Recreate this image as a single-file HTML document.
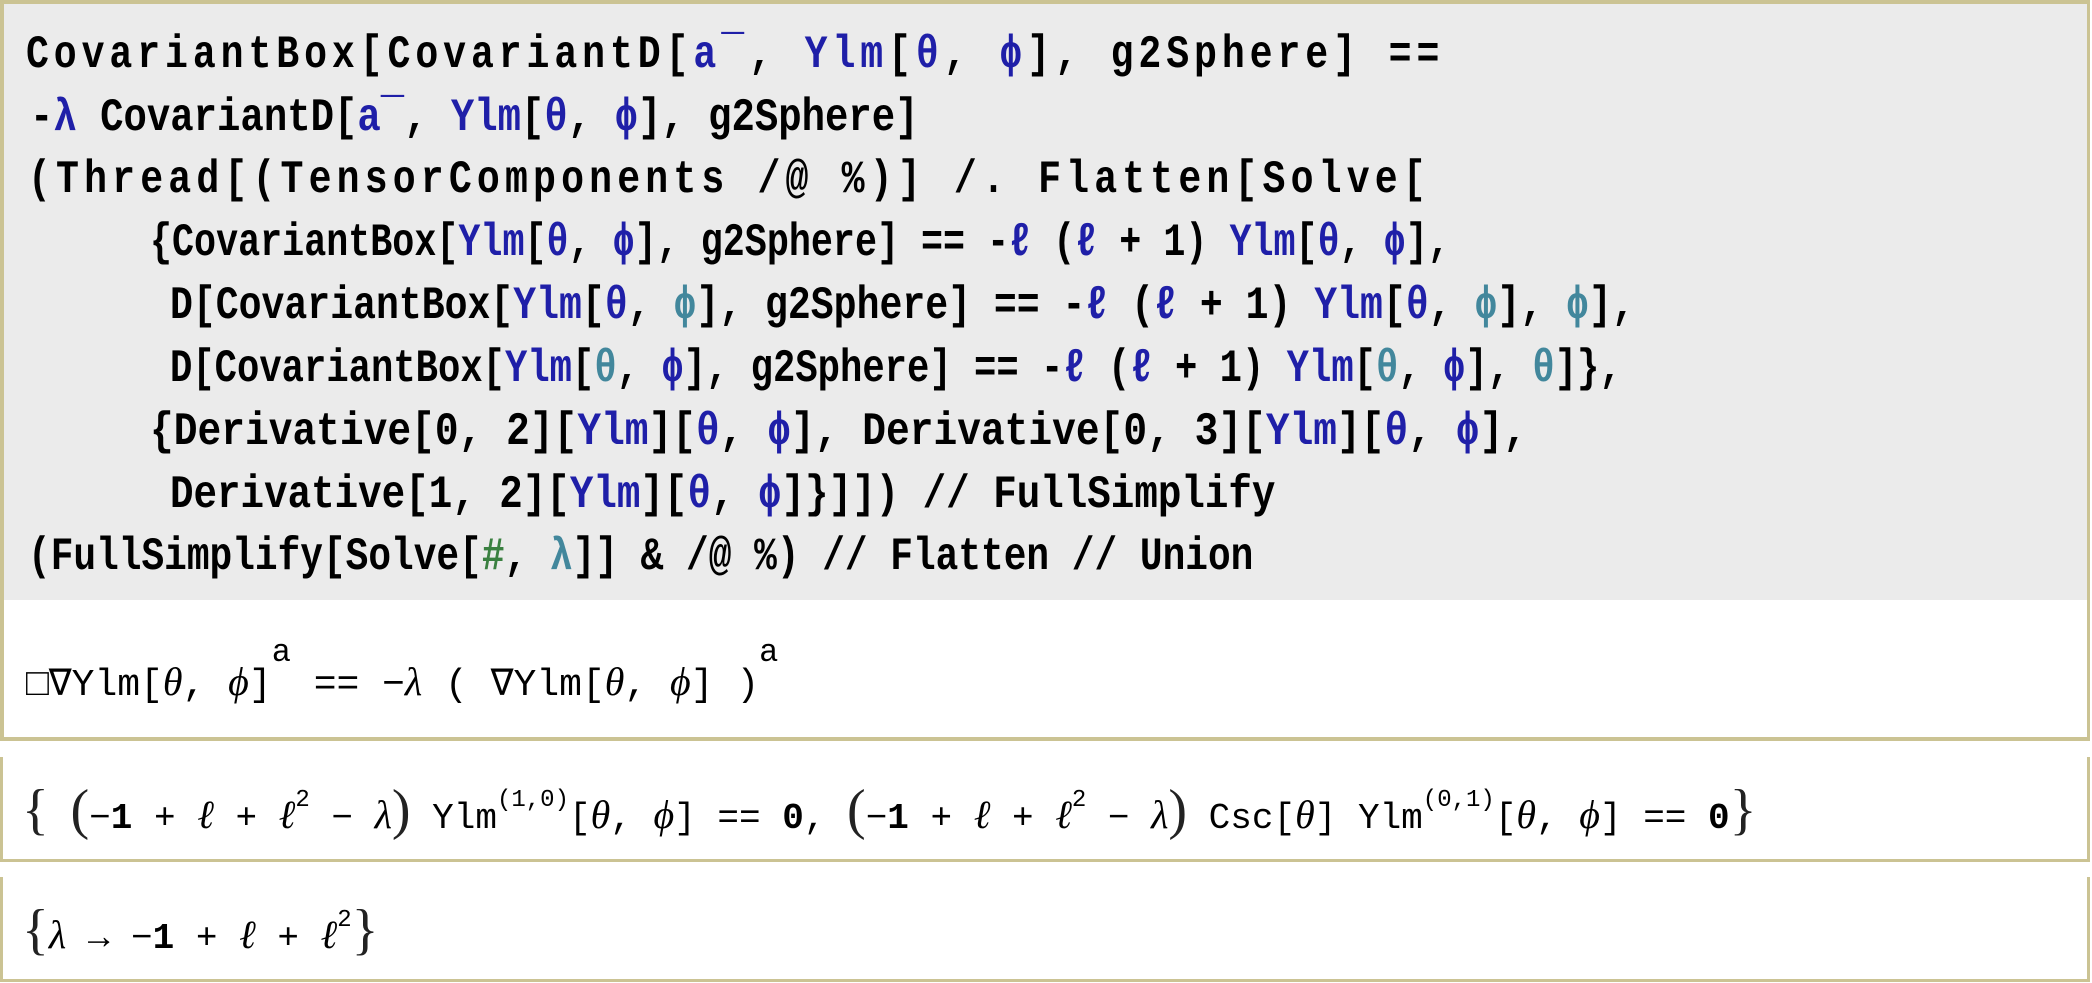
<!DOCTYPE html>
<html><head><meta charset="utf-8"><style>
html,body{margin:0;padding:0;background:#fff;width:2092px;height:983px;overflow:hidden;position:relative}
.cell{position:absolute;box-sizing:border-box;border:4px solid #cbc393}
.in{left:0;top:0;width:2090px;height:741px;border-width:4px 3px 4px 4px}
.gray{position:absolute;left:4px;top:4px;width:2083px;height:596px;background:#ebebeb}
.o2{left:0;top:757px;width:2090px;height:105px;border-width:0 3px 3px 3px}
.o3{left:0;top:877px;width:2090px;height:105px;border-width:0 3px 3px 3px}
.l{position:absolute;white-space:pre;font-family:"Liberation Mono",monospace;font-weight:bold;font-size:46px;letter-spacing:0;color:#000;line-height:50px;transform-origin:left}
.b{color:#1f1fa8}.t{color:#42879c}.g{color:#3a8040}
.o{position:absolute;white-space:pre;font-family:"Liberation Mono",monospace;font-size:38px;line-height:50px;color:#000}
.i{font-family:"Liberation Serif",serif;font-style:italic;font-size:40px}
.s{font-size:24px;vertical-align:22px}
.big{font-family:"Liberation Serif",serif;font-size:56px;font-weight:100;color:#222}
</style></head><body>
<div class="cell in"></div>
<div class="gray"></div>
<div class="l" style="left:26px;top:30px;transform:scaleX(0.83);letter-spacing:5.9px">CovariantBox[CovariantD[<span class="b">a¯</span>, <span class="b">Ylm</span>[<span class="b">θ</span>, <span class="b">ϕ</span>], g2Sphere] ==</div>
<div class="l" style="left:30px;top:93px;transform:scaleX(0.847)">-<span class="b">λ</span> CovariantD[<span class="b">a¯</span>, <span class="b">Ylm</span>[<span class="b">θ</span>, <span class="b">ϕ</span>], g2Sphere]</div>
<div class="l" style="left:28px;top:155px;transform:scaleX(0.83);letter-spacing:6.2px">(Thread[(TensorComponents /@ %)] /. Flatten[Solve[</div>
<div class="l" style="left:150px;top:218px;transform:scaleX(0.798)">{CovariantBox[<span class="b">Ylm</span>[<span class="b">θ</span>, <span class="b">ϕ</span>], g2Sphere] == -<span class="b">ℓ</span> (<span class="b">ℓ</span> + 1) <span class="b">Ylm</span>[<span class="b">θ</span>, <span class="b">ϕ</span>],</div>
<div class="l" style="left:170px;top:281px;transform:scaleX(0.829)">D[CovariantBox[<span class="b">Ylm</span>[<span class="b">θ</span>, <span class="t">ϕ</span>], g2Sphere] == -<span class="b">ℓ</span> (<span class="b">ℓ</span> + 1) <span class="b">Ylm</span>[<span class="b">θ</span>, <span class="t">ϕ</span>], <span class="t">ϕ</span>],</div>
<div class="l" style="left:170px;top:344px;transform:scaleX(0.809)">D[CovariantBox[<span class="b">Ylm</span>[<span class="t">θ</span>, <span class="b">ϕ</span>], g2Sphere] == -<span class="b">ℓ</span> (<span class="b">ℓ</span> + 1) <span class="b">Ylm</span>[<span class="t">θ</span>, <span class="b">ϕ</span>], <span class="t">θ</span>]},</div>
<div class="l" style="left:150px;top:407px;transform:scaleX(0.86)">{Derivative[0, 2][<span class="b">Ylm</span>][<span class="b">θ</span>, <span class="b">ϕ</span>], Derivative[0, 3][<span class="b">Ylm</span>][<span class="b">θ</span>, <span class="b">ϕ</span>],</div>
<div class="l" style="left:170px;top:470px;transform:scaleX(0.852)">Derivative[1, 2][<span class="b">Ylm</span>][<span class="b">θ</span>, <span class="b">ϕ</span>]}]]) // FullSimplify</div>
<div class="l" style="left:28px;top:532px;transform:scaleX(0.822)">(FullSimplify[Solve[<span class="g">#</span>, <span class="t">λ</span>]] &amp; /@ %) // Flatten // Union</div>

<div class="o" style="left:26px;top:628px">□∇Ylm[<span class="i">θ</span>, <span class="i">ϕ</span>]<span class="s" style="vertical-align:34px;font-size:32px">a</span> == −<span class="i">λ</span> ( ∇Ylm[<span class="i">θ</span>, <span class="i">ϕ</span>] )<span class="s" style="vertical-align:34px;font-size:32px">a</span></div>

<div class="cell o2"></div>
<div class="o" style="left:22px;top:776px;font-size:36px"><span class="big">{</span> <span class="big">(</span>−<b>1</b> + <span class="i">ℓ</span> + <span class="i">ℓ</span><span class="s">2</span> − <span class="i">λ</span><span class="big">)</span> Ylm<span class="s">(1,0)</span>[<span class="i">θ</span>, <span class="i">ϕ</span>] == <b>0</b>, <span class="big">(</span>−<b>1</b> + <span class="i">ℓ</span> + <span class="i">ℓ</span><span class="s">2</span> − <span class="i">λ</span><span class="big">)</span> Csc[<span class="i">θ</span>] Ylm<span class="s">(0,1)</span>[<span class="i">θ</span>, <span class="i">ϕ</span>] == <b>0</b><span class="big">}</span></div>

<div class="cell o3"></div>
<div class="o" style="left:22px;top:896px;font-size:36px"><span class="big">{</span><span class="i">λ</span> → −<b>1</b> + <span class="i">ℓ</span> + <span class="i">ℓ</span><span class="s">2</span><span class="big">}</span></div>
</body></html>
